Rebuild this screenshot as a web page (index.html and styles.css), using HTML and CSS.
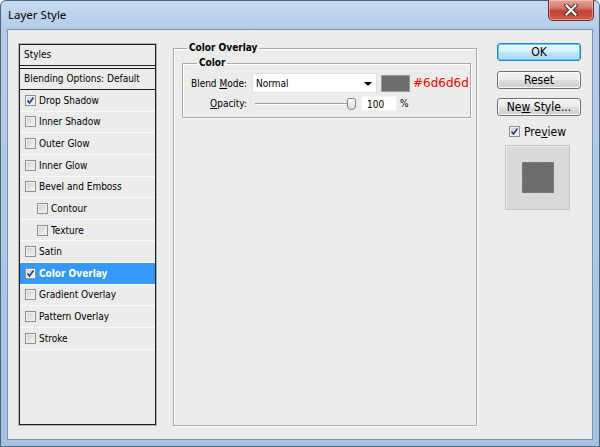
FILE: index.html
```html
<!DOCTYPE html>
<html>
<head>
<meta charset="utf-8">
<link rel="stylesheet" href="styles.css">
</head>
<body>
<div class="window">
  <div class="titlebar">
    <span class="title">Layer Style</span>
    <div class="close">
      <svg width="16" height="12" viewBox="0 0 16 12"><path d="M3.5 1.5 L12.5 10.5 M12.5 1.5 L3.5 10.5" stroke="#3a2a2a" stroke-width="4.2" stroke-linecap="square" fill="none"/><path d="M3.5 1.5 L12.5 10.5 M12.5 1.5 L3.5 10.5" stroke="#fff" stroke-width="2.2" stroke-linecap="square" fill="none"/></svg>
    </div>
  </div>
  <div class="client">
    <div class="panel">
      <div class="hdr">Styles</div>
      <div class="hdr blend">Blending Options: Default</div>
      <ul class="list">
        <li><span class="cb checked"><svg width="9" height="9" viewBox="0 0 9 9"><path d="M1.5 4.5 L3.5 7 L7.5 1.5" stroke="#1f3f94" stroke-width="1.6" fill="none"/></svg></span>Drop Shadow</li>
        <li><span class="cb"></span>Inner Shadow</li>
        <li><span class="cb"></span>Outer Glow</li>
        <li><span class="cb"></span>Inner Glow</li>
        <li><span class="cb"></span>Bevel and Emboss</li>
        <li class="sub"><span class="cb"></span>Contour</li>
        <li class="sub"><span class="cb"></span>Texture</li>
        <li><span class="cb"></span>Satin</li>
        <li class="sel"><span class="cb checked"><svg width="9" height="9" viewBox="0 0 9 9"><path d="M1.5 4.5 L3.5 7 L7.5 1.5" stroke="#1f3f94" stroke-width="1.6" fill="none"/></svg></span>Color Overlay</li>
        <li><span class="cb"></span>Gradient Overlay</li>
        <li><span class="cb"></span>Pattern Overlay</li>
        <li><span class="cb"></span>Stroke</li>
      </ul>
    </div>
    <fieldset class="grp outer">
      <legend>Color Overlay</legend>
      <fieldset class="grp inner">
        <legend>Color</legend>
        <div class="frow">
          <span class="lbl">Blend <u>M</u>ode:</span>
          <div class="select"><span>Normal</span><span class="arrow"></span></div>
          <div class="swatch"></div>
          <span class="hex">#6d6d6d</span>
        </div>
        <div class="frow row2">
          <span class="lbl"><u>O</u>pacity:</span>
          <div class="slider"><div class="track"></div><div class="thumb"></div></div>
          <div class="num">100</div>
          <span class="pct">%</span>
        </div>
      </fieldset>
    </fieldset>
    <div class="buttons">
      <div class="btn default">OK</div>
      <div class="btn reset">Reset</div>
      <div class="btn">Ne<u>w</u> Style...</div>
      <div class="preview-row"><span class="cb checked"><svg width="9" height="9" viewBox="0 0 9 9"><path d="M1.5 4.5 L3.5 7 L7.5 1.5" stroke="#1f3f94" stroke-width="1.6" fill="none"/></svg></span><span>Pre<u>v</u>iew</span></div>
      <div class="preview"><div class="pv-square"></div></div>
    </div>
  </div>
</div>
</body>
</html>
```

FILE: styles.css
```css
* { box-sizing: border-box; }
html, body { margin: 0; padding: 0; }
body {
  width: 600px; height: 447px; overflow: hidden;
  font-family: "DejaVu Sans Condensed", "DejaVu Sans", sans-serif;
  font-size: 10px; color: #000; background: #fff;
}
.window {
  width: 600px; height: 447px;
  border: 1px solid #4d6584;
  border-radius: 6px 6px 0 0;
  background: linear-gradient(#c6daf1, #b4cce8 30px, #a7c2e2);
  display: flex; flex-direction: column;
}
.titlebar {
  height: 28px; flex: none;
  display: flex; align-items: flex-start; justify-content: space-between;
  padding-left: 7px;
}
.title { font-family: "Noto Sans", sans-serif; font-size: 11.5px; line-height: 28px; color: #000; }
.close {
  width: 46px; height: 21px; margin-top: -1px; margin-right: 5px;
  border: 1px solid #6b2e26; border-top: none;
  border-radius: 0 0 5px 5px;
  background: linear-gradient(#e6a193, #d5786a 40%, #c2402f 55%, #cf5d49);
  box-shadow: inset 0 0 0 1px rgba(255,230,220,.45);
  display: flex; align-items: center; justify-content: center;
}
.client {
  flex: 1;
  margin: 0 6px 6px 6px;
  border: 1px solid #7d92ae;
  background: #ececec;
  display: flex; align-items: stretch;
  padding: 12px 11px 13px 11px;
}
.panel {
  width: 137px; flex: none;
  margin-top: 2px; margin-bottom: 1px;
  border: 1px solid #1e1e1e;
  box-shadow: 0 0 0 1px #b4b4b4;
  background: #ececec;
}
.hdr { height: 21px; line-height: 20px; padding-left: 4px; border-bottom: 1px solid #1e1e1e; }
.hdr.blend { margin-top: 2px; border-top: 1px solid #1e1e1e; height: 22px; }
.list { list-style: none; margin: 0; padding: 0; }
.list li {
  height: 21.64px; display: flex; align-items: center;
  padding-left: 5px; border-bottom: 1px solid #fbfbfb;
}
.list li.sub { padding-left: 17px; }
.list li.sel { background: #3399ff; color: #fff; font-weight: bold; }
.cb {
  width: 11px; height: 11px; flex: none; margin-right: 3px;
  border: 1px solid #8e8f8f;
  background: linear-gradient(135deg, #cfcfcf, #f6f6f6);
  box-shadow: inset 0 0 0 1px #f1f1f1;
  display: flex; align-items: center; justify-content: center;
}
.grp {
  margin: 0; min-width: 0;
  border: 1px solid #a9a9a9;
  box-shadow: 1px 1px 0 #fff, inset 1px 1px 0 #fff;
}
.grp legend { font-weight: bold; padding: 0 2px; line-height: 12px; }
.outer { width: 304px; flex: none; margin-left: 17px; padding: 3px 5px 0 8px; }
.outer > legend { margin-left: 5px; }
.inner { padding: 4px 6px 6px 4px; }
.inner > legend { margin-left: 10px; }
.frow { display: flex; align-items: center; height: 20px; }
.frow > * { flex: none; }
.row2 { height: 15px; margin-top: 3px; }
.lbl { width: 60px; text-align: right; white-space: nowrap; }
.select {
  width: 125px; height: 20px; margin-left: 5px;
  background: #fff; border: 1px solid #e0e0e0;
  display: flex; align-items: center; justify-content: space-between;
  padding: 0 4px 0 3px;
}
.arrow { width: 0; height: 0; border-left: 4px solid transparent; border-right: 4px solid transparent; border-top: 4px solid #000; margin-top: 1px; }
.swatch { width: 29px; height: 17px; margin-left: 4px; background: #6d6d6d; border: 1px solid #9a9a9a; }
.hex { margin-left: 3px; color: #ff0000; font-family: "DejaVu Sans", sans-serif; font-size: 12px; }
.slider { width: 105px; height: 15px; margin-left: 5px; position: relative; }
.track { position: absolute; left: 3px; right: 4px; top: 7px; height: 2px; border-top: 1px solid #a0a0a0; border-bottom: 1px solid #fff; }
.thumb {
  position: absolute; left: 95px; top: 2px; width: 9px; height: 12px;
  border: 1px solid #868686; border-radius: 2px 2px 4px 4px;
  background: linear-gradient(#fdfdfd, #dcdcdc);
}
.num { width: 36px; height: 15px; margin-left: 4px; background: #fff; line-height: 15px; padding-left: 5px; border: 1px solid #f4f4f4; }
.pct { margin-left: 3px; }
.buttons { width: 84px; flex: none; margin-left: 20px; margin-top: 1px; display: flex; flex-direction: column; font-size: 12px; }
.btn {
  height: 18px; line-height: 16px; text-align: center;
  border: 1px solid #707070; border-radius: 3px;
  background: linear-gradient(#f2f2f2, #ebebeb 48%, #dddddd 52%, #cfcfcf);
  box-shadow: inset 0 0 0 1px #fbfbfb;
}
.btn.default {
  border-color: #3c7fb1;
  background: linear-gradient(#eaf6fd, #d9f0fc 48%, #bee6fd 52%, #a7d9f5);
  box-shadow: inset 0 0 0 1px #48d2f6;
}
.btn.reset { margin-top: 10px; }
.btn + .btn:not(.reset) { margin-top: 9px; }
.preview-row { display: flex; align-items: center; margin-top: 9px; margin-left: 12px; height: 13px; }
.preview-row .cb { margin-right: 4px; }
.preview {
  width: 65px; height: 65px; margin-left: 8px; margin-top: 7px;
  background: #d9d9d9; border: 1px solid #c4c4c4;
  box-shadow: inset 1px 1px 0 #ececec;
  display: flex; align-items: center; justify-content: center;
}
.pv-square { width: 32px; height: 31px; background: #6d6d6d; border: 1px dashed #7e7e7e; }
```
